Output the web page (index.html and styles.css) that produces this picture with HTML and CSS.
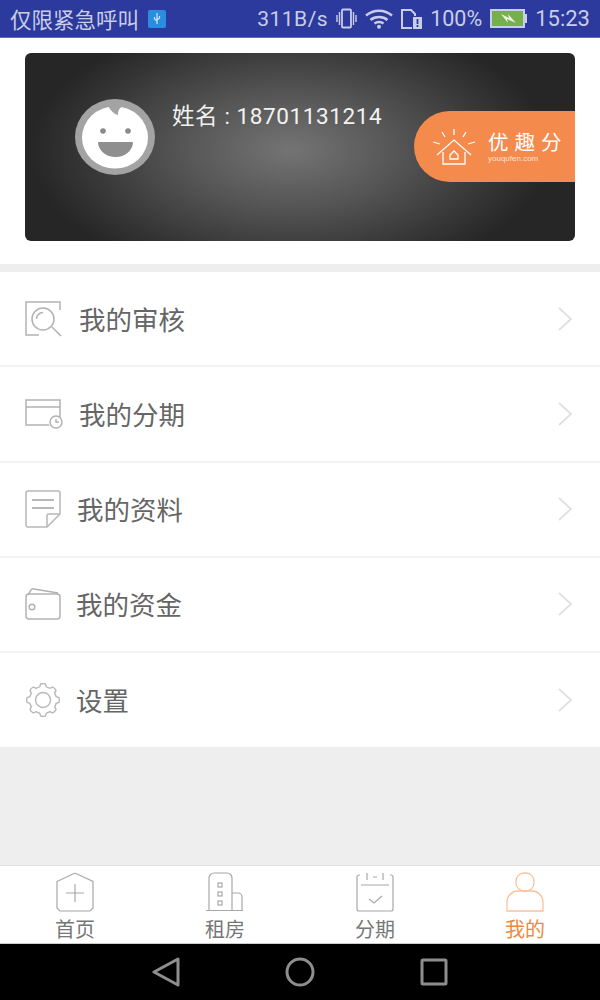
FILE: index.html
```html
<!DOCTYPE html>
<html lang="zh">
<head>
  <meta charset="UTF-8" />
  <title>我的</title>
  <link rel="stylesheet" href="styles.css">
</head>
<body>
  <div class="status-bar">
    <span class="carrier">仅限紧急呼叫</span>
    <svg class="usb" width="18" height="18" viewBox="0 0 18 18">
      <rect width="18" height="18" rx="2" fill="#2a8ee0"/>
      <path d="M9 3v11M6.500 7v2l2.500 2M11.500 6v2L9 10" stroke="#cfe6fa" stroke-width="1.200" fill="none"/>
    </svg>
    <span class="spacer"></span>
    <span class="speed">311B/s</span>
    <svg width="21" height="21" viewBox="0 0 21 21" fill="none" stroke="#c9cde8" stroke-width="1.800">
      <rect x="6" y="1.500" width="9" height="18" rx="1"/>
      <path d="M3.500 4v13M1 7v7M17.500 4v13M20 7v7" stroke-width="1.400"/>
    </svg>
    <svg width="28" height="21" viewBox="0 0 28 21" fill="none" stroke="#c9cde8" stroke-width="2.500">
      <path d="M1 7.500c7.500-6.500 18.500-6.500 26 0M5.500 12c4.500-4 12.500-4 17 0M9.500 15.500c2.500-2 6.500-2 9 0"/>
      <circle cx="14" cy="18.700" r="2" fill="#c9cde8" stroke="none"/>
    </svg>
    <svg class="sim" width="21" height="20" viewBox="0 0 21 20" fill="none" stroke="#c9cde8" stroke-width="2">
      <path d="M11 19H1V1h9l4 4v2"/>
      <rect x="12" y="8" width="9" height="12" fill="#c9cde8" stroke="none"/>
      <path d="M16.500 10v5M16.500 16v2" stroke="#2c3a9d" stroke-width="1.800"/>
    </svg>
    <span class="percent">100%</span>
    <svg width="37" height="19" viewBox="0 0 37 19">
      <rect x="1" y="1" width="33" height="17" fill="#76b04a" stroke="#c9cde8" stroke-width="2"/>
      <rect x="34.500" y="5" width="2.500" height="9" fill="#c9cde8"/>
      <path d="M11 5l8 4-1-4 8 9-9-4 1 4z" fill="#e8f0e0"/>
    </svg>
    <span class="time">15:23</span>
  </div>

  <div class="card-wrap">
    <div class="card">
      <svg class="avatar" width="80" height="76" viewBox="0 0 80 76">
        <ellipse cx="40" cy="38" rx="40" ry="38" fill="#a3a3a3"/>
        <ellipse cx="40" cy="38.500" rx="33" ry="31" fill="#fff"/>
        <path d="M33 7c4-1 10-1 14 1-3 1-4 4-4 8-4-1-7-4-10-9z" fill="#a3a3a3"/>
        <circle cx="28" cy="32" r="2.800" fill="#8a8a8a"/>
        <circle cx="53" cy="32" r="2.800" fill="#8a8a8a"/>
        <path d="M24 43h33c.5 0 1 .5 1 1-1 8-8 14-17.500 14S24 52 23 44c0-.5.5-1 1-1z" fill="#8f8f8f"/>
      </svg>
      <div class="user-name">姓名 : 18701131214</div>
      <div class="brand">
        <svg width="44" height="37" viewBox="0 0 44 37" fill="none" stroke="#fff" stroke-width="1.300">
          <path d="M22 1v6M10 4l3 5M34 4l-3 5M1 14l7 2M43 14l-7 2"/>
          <path d="M5 27l17-15 17 15M11 24v12h22V24"/>
          <path d="M18 27l4-4 4 4v4h-8z"/>
        </svg>
        <div class="brand-text">
          <div class="brand-name">优趣分</div>
          <div class="brand-url">youqufen.com</div>
        </div>
      </div>
    </div>
  </div>

  <div class="band"></div>

  <div class="menu">
    <div class="menu-row">
      <svg class="menu-icon" width="38" height="36" viewBox="0 0 38 36" fill="none" stroke="#b2b2b2" stroke-width="1.500">
        <path d="M35 9V1H1v33h13"/>
        <circle cx="18" cy="18" r="11"/>
        <path d="M11.500 18a6.500 6.500 0 0 1 6.500-6.500M27 26l9 9"/>
      </svg>
      <span class="menu-label">我的审核</span>
      <svg class="chevron" width="16" height="24" viewBox="0 0 16 24" fill="none" stroke="#e0e0e0" stroke-width="1.800">
        <path d="M2 1l12 11L2 23"/>
      </svg>
    </div>
    <div class="menu-row">
      <svg class="menu-icon" width="38" height="30" viewBox="0 0 38 30" fill="none" stroke="#b2b2b2" stroke-width="1.500">
        <path d="M24 26H1V1h34v17M1 8h34"/>
        <circle cx="31" cy="23" r="6"/>
        <path d="M31 20v3h3"/>
      </svg>
      <span class="menu-label">我的分期</span>
      <svg class="chevron" width="16" height="24" viewBox="0 0 16 24" fill="none" stroke="#e0e0e0" stroke-width="1.800">
        <path d="M2 1l12 11L2 23"/>
      </svg>
    </div>
    <div class="menu-row row-docs">
      <svg class="menu-icon" width="36" height="38" viewBox="0 0 36 38" fill="none" stroke="#b8b8b8" stroke-width="1.500">
        <path d="M22 37H3a2 2 0 0 1-2-2V3a2 2 0 0 1 2-2h30a2 2 0 0 1 2 2v21L22 37zM22 37V26a2 2 0 0 1 2-2h11"/>
        <path d="M7 10h22M7 18h22" stroke-width="1.800"/>
      </svg>
      <span class="menu-label">我的资料</span>
      <svg class="chevron" width="16" height="24" viewBox="0 0 16 24" fill="none" stroke="#e0e0e0" stroke-width="1.800">
        <path d="M2 1l12 11L2 23"/>
      </svg>
    </div>
    <div class="menu-row row-narrow">
      <svg class="menu-icon" width="36" height="32" viewBox="0 0 36 32" fill="none" stroke="#b2b2b2" stroke-width="1.500">
        <rect x="1" y="6" width="34" height="25" rx="3"/>
        <path d="M3 7l3-5c.5-1 1.500-1.500 3-1l24 4"/>
        <circle cx="7" cy="19" r="2.800"/>
      </svg>
      <span class="menu-label">我的资金</span>
      <svg class="chevron" width="16" height="24" viewBox="0 0 16 24" fill="none" stroke="#e0e0e0" stroke-width="1.800">
        <path d="M2 1l12 11L2 23"/>
      </svg>
    </div>
    <div class="menu-row row-narrow">
      <svg class="menu-icon" width="36" height="34" viewBox="0 0 36 34" fill="none" stroke="#b8b8b8" stroke-width="1.400">
        <defs>
          <path id="tooth" d="M14.700 3.900L15.600 1Q18 .3 20.400 1L21.300 3.900Q23.200 4.400 24.950 5.430"/>
        </defs>
        <use href="#tooth"/>
        <use href="#tooth" transform="rotate(45 18 17)"/>
        <use href="#tooth" transform="rotate(90 18 17)"/>
        <use href="#tooth" transform="rotate(135 18 17)"/>
        <use href="#tooth" transform="rotate(180 18 17)"/>
        <use href="#tooth" transform="rotate(225 18 17)"/>
        <use href="#tooth" transform="rotate(270 18 17)"/>
        <use href="#tooth" transform="rotate(315 18 17)"/>
        <circle cx="18" cy="17" r="7.500"/>
      </svg>
      <span class="menu-label">设置</span>
      <svg class="chevron" width="16" height="24" viewBox="0 0 16 24" fill="none" stroke="#e0e0e0" stroke-width="1.800">
        <path d="M2 1l12 11L2 23"/>
      </svg>
    </div>
  </div>

  <div class="filler"></div>

  <div class="tab-bar">
    <div class="tab">
      <svg width="40" height="40" viewBox="0 0 40 40" fill="none" stroke="#a8a8a8" stroke-width="1.200">
        <path d="M2 9.500L19 1.500q1-.5 2 0l17 8V36l-3 3H5l-3-3zM11 21h18M20 12v18"/>
      </svg>
      <span class="tab-label">首页</span>
    </div>
    <div class="tab">
      <svg width="38" height="40" viewBox="0 0 38 40" fill="none" stroke="#a8a8a8" stroke-width="1.200">
        <path d="M3 38V6a5 5 0 0 1 5-5h13a5 5 0 0 1 5 5v32M26 21h6a4 4 0 0 1 4 4v13M0 38.500h37"/>
        <rect x="12" y="11" width="4" height="4"/>
        <rect x="12" y="20" width="4" height="4"/>
        <rect x="12" y="29" width="4" height="4"/>
      </svg>
      <span class="tab-label">租房</span>
    </div>
    <div class="tab">
      <svg width="38" height="40" viewBox="0 0 38 40" fill="none" stroke="#a8a8a8" stroke-width="1.200">
        <path d="M4 3h-1a2 2 0 0 0-2 2v32a2 2 0 0 0 2 2h32a2 2 0 0 0 2-2V5a2 2 0 0 0-2-2h-1M5 13h28M11 1v7M27 1v7M17 5h4M13 27l5 4 8-7"/>
      </svg>
      <span class="tab-label">分期</span>
    </div>
    <div class="tab tab-active">
      <svg width="38" height="40" viewBox="0 0 38 40" fill="none" stroke="#f9c29b" stroke-width="1.300">
        <rect x="10" y="1" width="18" height="18" rx="8"/>
        <path d="M1 39V30a11 11 0 0 1 11-11h14a11 11 0 0 1 11 11v9z"/>
      </svg>
      <span class="tab-label">我的</span>
    </div>
  </div>

  <div class="nav-bar">
    <svg width="28" height="30" viewBox="0 0 28 30" fill="none" stroke="#8e8e8e" stroke-width="3" stroke-linejoin="round">
      <path d="M26 2v26L2 15z"/>
    </svg>
    <svg width="30" height="30" viewBox="0 0 30 30" fill="none" stroke="#8e8e8e" stroke-width="3">
      <circle cx="15" cy="15" r="13"/>
    </svg>
    <svg width="28" height="28" viewBox="0 0 28 28" fill="none" stroke="#8e8e8e" stroke-width="3" stroke-linejoin="round">
      <rect x="2" y="2" width="24" height="24" rx="1"/>
    </svg>
  </div>
</body>
</html>
```

FILE: styles.css
```css
* {
  margin: 0;
  padding: 0;
  box-sizing: border-box;
}
body {
  width: 600px;
  height: 1000px;
  display: flex;
  flex-direction: column;
  background: #fff;
  overflow: hidden;
  font-family: "Noto Sans CJK SC", "Noto Sans", sans-serif;
}
/* Status bar */
.status-bar {
  height: 38px;
  flex: none;
  display: flex;
  align-items: center;
  gap: 8px;
  padding: 0 10px;
  background: #2c3a9d;
  color: #c9cde8;
  border-bottom: 1px solid #5f6bb8;
  font-family: Roboto, "Noto Sans CJK SC", sans-serif;
  font-size: 21px;
}
.carrier {
  font-family: "Noto Sans CJK SC", sans-serif;
  font-size: 21.500px;
  margin-right: 1px;
}
.spacer {
  flex: 1;
}
.speed {
  letter-spacing: 0.500px;
}
.percent {
  font-size: 21.500px;
}
.time {
  font-size: 22px;
}
/* Card */
.card-wrap {
  height: 226px;
  flex: none;
  padding: 15px 25px 0;
}
.card {
  position: relative;
  height: 188px;
  display: flex;
  align-items: flex-start;
  padding: 46px 0 0 50px;
  border-radius: 6px;
  background: radial-gradient(ellipse 260px 135px at 265px 97px, #747474 0%, #555 42%, #343434 82%, #262626 100%);
}
.avatar {
  flex: none;
}
.user-name {
  margin: 0 0 0 17px;
  color: #f2f2f2;
  font-family: Roboto, "Noto Sans CJK SC", sans-serif;
  font-size: 22.500px;
  line-height: 34px;
  letter-spacing: 0.600px;
}
.brand {
  position: absolute;
  right: 0;
  top: 58px;
  width: 161px;
  height: 71px;
  display: flex;
  align-items: center;
  gap: 12px;
  padding-left: 18px;
  background: #f58a4d;
  border-radius: 36px 0 0 36px;
  color: #fff;
}
.brand-name {
  font-size: 20.500px;
  line-height: 24px;
  letter-spacing: 6px;
  white-space: nowrap;
}
.brand-url {
  font-family: "Liberation Sans", sans-serif;
  font-size: 8px;
  line-height: 11px;
  color: #fde3d2;
}
.band {
  height: 8px;
  flex: none;
  background: #eeeeee;
}
/* Menu rows */
.menu {
  height: 475px;
  flex: none;
}
.menu-row {
  height: 95.250px;
  display: flex;
  align-items: center;
  padding: 0 27px 0 25px;
  border-bottom: 2px solid #f3f3f3;
}
.menu-row:last-child {
  height: 94px;
  border-bottom: none;
}
.menu-icon {
  flex: none;
}
.menu-label {
  flex: 1;
  margin-left: 16px;
  color: #666;
  font-size: 26.500px;
}
.row-docs .menu-label {
  margin-top: -2px;
}
.row-narrow .menu-label {
  margin-left: 15px;
  margin-top: -2px;
}
.chevron {
  flex: none;
}
.filler {
  flex: 1;
  background: #eeeeee;
}
/* Bottom tabs */
.tab-bar {
  height: 79px;
  flex: none;
  display: flex;
  background: #fff;
  border-top: 1px solid #e2e2e2;
  border-bottom: 1px solid #ccc;
}
.tab {
  flex: 1;
  display: flex;
  flex-direction: column;
  align-items: center;
  padding-top: 6px;
}
.tab-label {
  color: #777;
  font-size: 20px;
  line-height: 24px;
  margin-top: 5px;
}
.tab-active .tab-label {
  color: #ee8a3c;
}
.nav-bar {
  height: 56px;
  flex: none;
  display: flex;
  align-items: center;
  justify-content: center;
  gap: 105px;
  background: #000;
}
```
